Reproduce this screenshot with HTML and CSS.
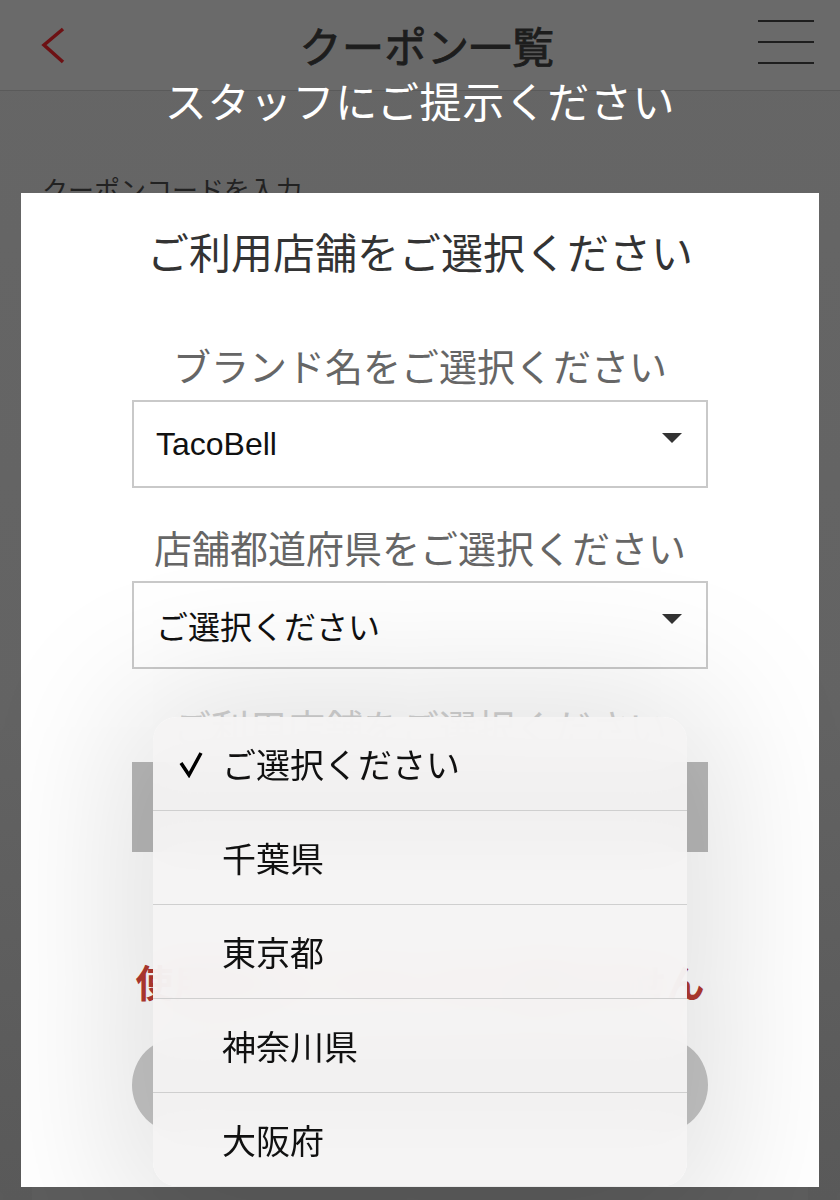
FILE: index.html
```html
<!DOCTYPE html>
<html lang="ja">
  <head>
    <meta charset="UTF-8" />
    <meta name="viewport" content="width=device-width, initial-scale=1.0" />
    <title>クーポン一覧</title>
    <link rel="stylesheet" href="styles.css">
  </head>
  <body>
    <div class="screen">
      <header class="topbar">
        <a class="back" href="#">
          <svg width="28" height="42" viewBox="0 0 28 42">
            <polyline points="23,4 4,20 23,37" fill="none" stroke="currentColor" stroke-width="3.5" />
          </svg>
        </a>
        <h1>クーポン一覧</h1>
        <button class="menu" type="button">
          <span></span><span></span><span></span>
        </button>
      </header>

      <main class="content">
        <p class="code-label">クーポンコードを入力</p>
        <div class="code-card"></div>
      </main>

      <p class="notice">スタッフにご提示ください</p>

      <div class="modal">
        <h2>ご利用店舗をご選択ください</h2>

        <p class="field-label first">ブランド名をご選択ください</p>
        <div class="select">TacoBell</div>

        <p class="field-label">店舗都道府県をご選択ください</p>
        <div class="select">ご選択ください</div>

        <p class="field-label faint">ご利用店舗をご選択ください</p>
        <div class="select disabled"></div>

        <p class="warning">使用済みにすると元に戻せません</p>
        <button class="use-btn" type="button"></button>

        <!-- prefecture picker, opened from the second select -->
        <ul class="picker">
          <li class="selected">
            <svg class="check" width="26" height="28" viewBox="0 0 26 28">
              <polyline points="3,13 11,25 23,3" fill="none" stroke="#000" stroke-width="3.5" />
            </svg>
            <span>ご選択ください</span>
          </li>
          <li><span>千葉県</span></li>
          <li><span>東京都</span></li>
          <li><span>神奈川県</span></li>
          <li><span>大阪府</span></li>
        </ul>
      </div>
    </div>
  </body>
</html>
```

FILE: styles.css
```css
body {
  margin: 0;
  background-color: #5e5e5e;
  font-family: "Noto Sans CJK JP", "Noto Sans", sans-serif;
}

.screen {
  position: relative;
  width: 840px;
  height: 1200px;
  overflow: hidden;
  background: linear-gradient(#666666, #636363 60%, #5a5a5a);
}

.topbar {
  display: grid;
  grid-template-columns: 1fr auto 1fr;
  align-items: center;
  height: 90px;
  padding: 0 26px 0 40px;
  background-color: #6a6a6a;
  border-bottom: 1px solid #5a5a5a;
}

.back {
  display: flex;
  color: #6d1114;
  margin-top: 2px;
}

.topbar h1 {
  margin: 0;
  font-size: 42px;
  font-weight: 400;
  -webkit-text-stroke: 0.9px #1d1d1d;
  letter-spacing: 0.5px;
  color: #1d1d1d;
  line-height: 90px;
}

.menu {
  justify-self: end;
  align-self: start;
  display: flex;
  flex-direction: column;
  gap: 19px;
  margin-top: 20px;
  padding: 0;
  border: none;
  background: none;
}

.menu span {
  display: block;
  width: 56px;
  height: 2px;
  background-color: #1e1e1e;
}

.content {
  padding: 0 32px;
}

.code-label {
  margin: 80px 10px 0;
  font-size: 26px;
  line-height: 36px;
  color: #222;
}

.code-card {
  height: 1000px;
  margin-top: 20px;
  background-color: #5d5d5d;
}

.notice {
  position: absolute;
  top: 78px;
  left: 0;
  right: 0;
  margin: 0;
  text-align: center;
  font-size: 42px;
  letter-spacing: 0.6px;
  line-height: 44px;
  color: #ffffff;
}

.modal {
  position: absolute;
  left: 21px;
  top: 193px;
  width: 798px;
  height: 994px;
  box-sizing: border-box;
  padding: 28px 111px 0;
  background-color: #ffffff;
}

.modal h2 {
  margin: 0;
  text-align: center;
  font-size: 42px;
  font-weight: 400;
  line-height: 60px;
  color: #333;
}

.field-label {
  margin: 32px 0 7px;
  text-align: center;
  font-size: 38px;
  line-height: 54px;
  color: #666;
}

.field-label.first {
  margin: 57px 0 8px;
}

.field-label.faint {
  margin: 30px 0 9px;
  color: #d2d2d2;
}

.select {
  position: relative;
  display: flex;
  align-items: center;
  height: 88px;
  box-sizing: border-box;
  padding-left: 22px;
  border: 2px solid #c9c9c9;
  background-color: #ffffff;
  font-family: "Liberation Sans", "Noto Sans CJK JP", sans-serif;
  font-size: 32px;
  color: #111;
}

.select::after {
  content: "";
  position: absolute;
  right: 24px;
  top: 31px;
  border-left: 10px solid transparent;
  border-right: 10px solid transparent;
  border-top: 10px solid #333;
}

.select.disabled {
  height: 90px;
  border: none;
  background-color: #b9b9b9;
}

.select.disabled::after {
  display: none;
}

.warning {
  margin: 102px 0 0;
  text-align: center;
  font-size: 38px;
  font-weight: 700;
  line-height: 54px;
  color: #b43a30;
}

.use-btn {
  display: block;
  width: 100%;
  height: 96px;
  margin-top: 29px;
  border: none;
  border-radius: 48px;
  background-color: #c6c6c6;
}

.picker {
  position: absolute;
  left: 132px;
  top: 524px;
  width: 534px;
  margin: 0;
  padding: 0;
  list-style: none;
  border-radius: 24px;
  overflow: hidden;
  background-color: rgba(244, 243, 243, 0.94);
  backdrop-filter: blur(24px);
  box-shadow: 0 10px 150px 30px rgba(0, 0, 0, 0.13);
}

.picker li {
  display: grid;
  grid-template-columns: 69px 1fr;
  align-items: center;
  height: 93px;
  font-size: 34px;
  color: #111;
}

.picker li + li {
  border-top: 1px solid #cfcfcf;
}

.picker li span {
  grid-column: 2;
}

.picker .check {
  grid-column: 1;
  grid-row: 1;
  margin-left: 25px;
}
```
